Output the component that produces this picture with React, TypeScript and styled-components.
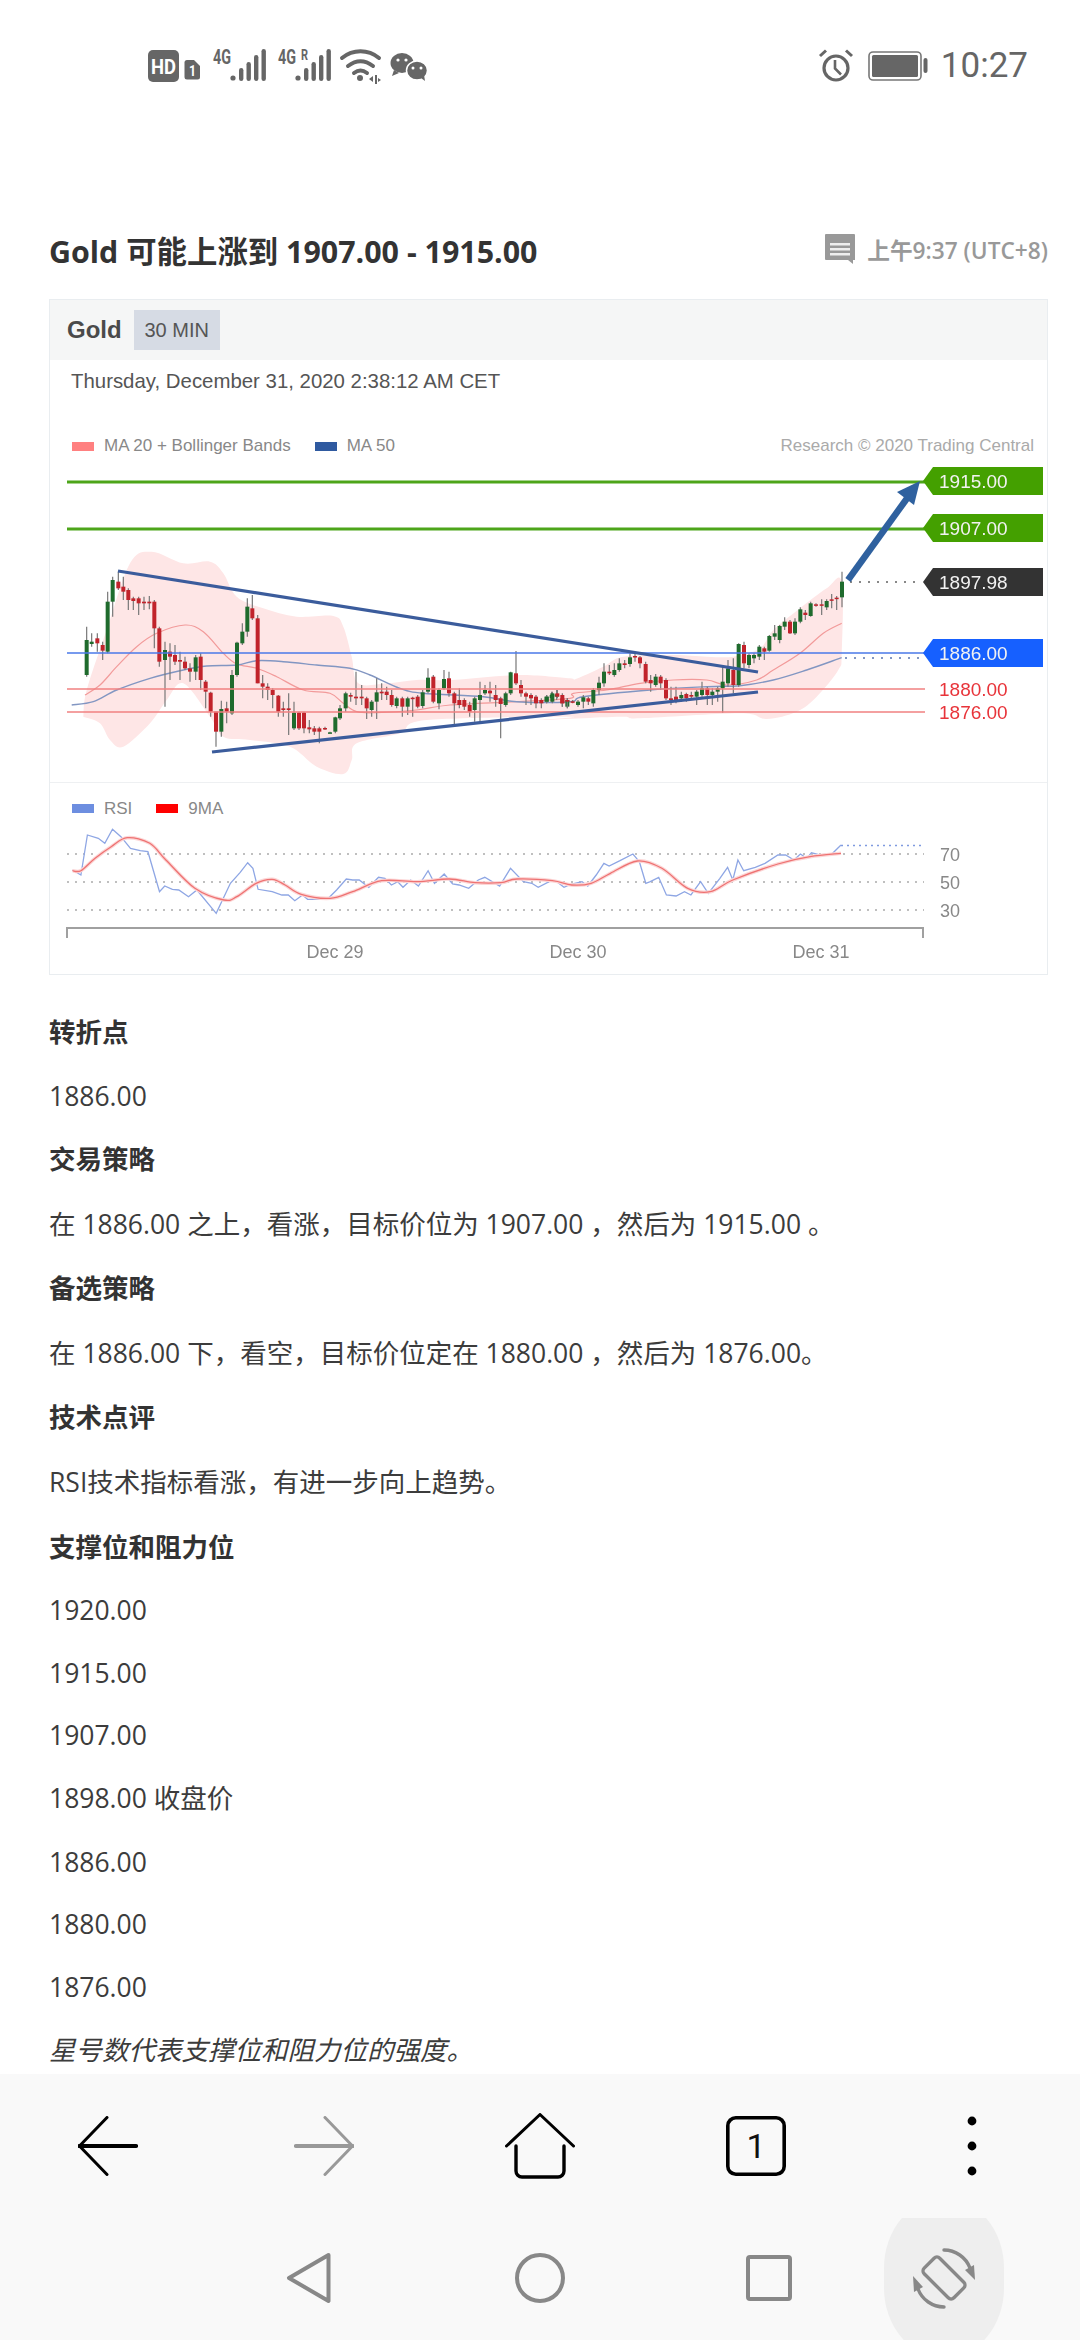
import React from "react";
import styled, { createGlobalStyle } from "styled-components";

const GlobalStyle = createGlobalStyle`
  html, body {
    margin: 0;
    padding: 0;
    background: #fff;
  }
  * {
    box-sizing: border-box;
  }
`;

const Page = styled.div`
  width: 1080px;
  height: 2340px;
  display: flex;
  flex-direction: column;
  overflow: hidden;
  background: #fff;
  color: #333;
  font-family: "Open Sans", "Noto Sans CJK SC", sans-serif;
`;

const StatusBar = styled.div`
  height: 130px;
  flex: none;
  display: flex;
  align-items: flex-start;
  justify-content: space-between;
  padding: 40px 52px 0 148px;
`;

const StatusRight = styled.div`
  display: flex;
  align-items: center;
  gap: 13px;
  height: 34px;
  margin-top: 9px;
`;

const Clock = styled.span`
  font-family: Roboto, sans-serif;
  font-size: 35px;
  line-height: 34px;
  color: #666;
`;

const Content = styled.div`
  flex: 1;
  min-height: 0;
  overflow: hidden;
  padding: 100px 32px 0 49px;
`;

const TitleRow = styled.div`
  display: flex;
  align-items: center;
  justify-content: space-between;
  height: 44px;
`;

const Title = styled.h1`
  margin: 0;
  font-size: 30.4px;
  font-weight: 700;
  line-height: 44px;
  color: #333;
`;

const Stamp = styled.div`
  display: flex;
  align-items: center;
  gap: 10px;
  margin-top: -6px;
  font-size: 22.7px;
  font-weight: 600;
  color: #999;
`;

const Card = styled.div`
  margin-top: 25px;
  height: 676px;
  border: 1px solid #e9edf0;
  font-family: "Liberation Sans", sans-serif;
`;

const CardHeader = styled.div`
  height: 60px;
  display: flex;
  align-items: center;
  gap: 12px;
  padding-left: 17px;
  background: #f5f6f6;
`;

const Symbol = styled.span`
  font-size: 24px;
  font-weight: 700;
  color: #4a4a4a;
`;

const Period = styled.span`
  width: 86px;
  height: 40px;
  display: flex;
  align-items: center;
  justify-content: center;
  background: #d6dbe4;
  font-size: 20px;
  color: #555;
`;

const DateLine = styled.div`
  height: 44px;
  padding-left: 21px;
  font-size: 20.4px;
  line-height: 42px;
  color: #555;
`;

const LegendRow = styled.div<{ $height: number; $top: number }>`
  height: ${({ $height }) => $height}px;
  display: flex;
  align-items: center;
  gap: 10px;
  padding: ${({ $top }) => $top}px 13px 0 22px;
  font-size: 17px;
  color: #888;
`;

const Swatch = styled.i<{ $color: string }>`
  width: 22px;
  height: 9px;
  background: ${({ $color }) => $color};
`;

const LegendGap = styled.span`
  width: 4px;
`;

const Credit = styled.span`
  margin-left: auto;
  color: #aaa;
`;

const ChartSvg = styled.svg`
  display: block;
  width: 998px;
  filter: blur(0.5px);
  text {
    font-family: "Liberation Sans", sans-serif;
  }
`;

const Divider = styled.div`
  height: 1px;
  background: #eef0f2;
`;

const Article = styled.div`
  margin-top: 38px;
`;

// rows with only digits sit a little tighter than rows with CJK glyphs
const Para = styled.p<{ $bold?: boolean; $italic?: boolean; $plain?: boolean }>`
  margin: 0 0 25.7px;
  font-size: 26.5px;
  line-height: ${({ $plain }) => ($plain ? "36.7px" : "38.9px")};
  white-space: nowrap;
  color: ${({ $bold }) => ($bold ? "#333" : "#3c3c3c")};
  font-weight: ${({ $bold }) => ($bold ? 700 : 400)};
  font-style: ${({ $italic }) => ($italic ? "italic" : "normal")};
`;

const Toolbar = styled.div`
  height: 144px;
  flex: none;
  display: grid;
  grid-template-columns: repeat(5, 216px);
  background: #f9f9f9;
`;

const ToolButton = styled.div`
  display: flex;
  align-items: center;
  justify-content: center;
`;

const NavBar = styled.div`
  height: 122px;
  flex: none;
  display: flex;
  overflow: hidden;
  background: #f9f9f9;
`;

const NavButton = styled.div<{ $left: number; $active?: boolean }>`
  width: 120px;
  height: ${({ $active }) => ($active ? "160px" : "120px")};
  margin-top: ${({ $active }) => ($active ? "-20px" : "0")};
  margin-left: ${({ $left }) => $left}px;
  display: flex;
  align-items: center;
  justify-content: center;
  border-radius: ${({ $active }) => ($active ? "60px / 70px" : "0")};
  background: ${({ $active }) => ($active ? "#eeeeee" : "transparent")};
`;

// [x, bodyTop, bodyBottom, wickTop, wickBottom, green?] traced from the chart, 3x zoomed coords
type Candle = [number, number, number, number, number, number];

const leftCandles: Candle[] = [
  [110,360,465,320,470,1],[125,365,372,340,380,1],[142,355,370,340,395,0],[158,375,392,365,420,0],
  [173,245,395,215,400,1],[188,180,245,170,290,1],[205,185,205,155,210,0],[220,200,215,170,240,0],
  [235,210,240,205,270,0],[250,235,243,230,270,0],[266,235,250,230,285,0],[282,245,250,230,270,0],
  [298,245,250,228,268,0],[313,245,325,240,385,0],[328,325,425,320,440,0],[345,390,420,365,560,1],
  [360,395,410,370,480,0],[375,405,425,375,435,0],[390,420,425,395,480,0],[405,425,445,410,450,0],
  [420,445,455,430,485,0],[437,412,455,405,480,1],[452,410,480,400,510,0],[467,485,515,480,565,0],
  [482,518,575,515,590,0],[498,575,635,575,680,0],[514,567,635,542,650,1],[530,565,575,545,610,0],
  [546,465,580,450,585,1],[561,368,465,365,470,1],[577,335,370,310,375,1],[592,260,335,235,350,1],
  [607,265,295,225,300,0],[623,295,490,285,490,0],[638,490,500,465,535,0],[653,500,510,490,540,0],
  [668,510,525,505,565,0],[685,527,575,525,590,0],[700,565,570,545,590,0],[716,565,570,520,645,0],
  [732,578,625,545,630,1],[747,578,625,575,630,0],[762,578,625,575,640,0],[778,622,628,600,640,0],
  [793,625,635,618,645,0],[808,625,635,620,670,0],[825,624,628,620,630,0],[840,637,640,635,640,1],
  [856,592,635,590,640,1],[870,565,595,555,600,1],[887,520,565,515,575,1],[902,525,530,518,545,0],
  [918,530,535,455,555,0],[935,530,535,495,555,0],[950,535,565,530,597,0],[965,545,570,540,590,1],
  [980,517,545,475,597,1],[995,515,520,490,540,0],[1010,515,525,500,540,0],[1025,525,555,510,560,0],
  [1040,535,558,530,565,1],[1057,535,560,530,590,0],[1073,535,560,530,585,1],[1088,533,537,530,590,0],
  [1103,530,560,525,565,0],[1118,517,558,510,565,1],[1134,473,515,445,520,1],[1150,470,545,465,550,0],
  [1167,510,550,505,568,1],[1182,477,505,450,510,1],[1197,475,520,455,530,0],[1213,520,550,515,612,0],
  [1228,540,555,505,565,0],[1243,540,560,535,570,0],[1259,555,575,545,590,0],[1274,535,570,530,605,1],
  [1290,525,540,485,605,1],[1305,510,520,495,525,1],[1320,512,520,485,545,0],[1337,525,540,495,560,0],
  [1352,535,552,530,655,0],[1367,520,555,515,560,1],[1382,457,520,455,525,1],[1398,460,490,393,495,0],
  [1413,495,520,480,530,0],[1428,520,530,515,555,0],[1443,525,535,520,555,0],[1458,530,550,525,565,0],
  [1474,540,550,535,565,0],[1490,530,545,525,550,1],[1505,525,535,515,545,1],[1520,523,530,510,540,1],
  [1537,535,550,525,560,0],[1552,540,560,535,565,1],
];

const rightCandles: Candle[] = [
  [20,530,545,525,550,1],[37,520,545,515,550,1],[52,520,530,510,535,0],[67,525,550,520,560,0],
  [82,540,545,535,565,0],[98,544,547,540,550,0],[114,545,555,540,560,1],[130,532,545,525,565,1],
  [145,535,545,530,555,0],[160,510,550,505,560,1],[177,488,510,470,525,1],[192,455,490,430,500,1],
  [208,455,460,435,465,0],[223,450,465,430,470,1],[238,430,450,415,455,1],[254,430,435,420,445,0],
  [270,412,432,400,440,1],[285,408,412,400,425,0],[300,412,430,408,445,0],[317,432,485,425,490,0],
  [332,480,490,465,515,0],[347,470,495,462,500,1],[362,470,490,465,510,0],[378,480,535,475,540,0],
  [393,535,540,500,555,0],[408,530,540,500,550,0],[424,525,535,515,545,1],[439,522,535,518,545,0],
  [454,525,530,515,540,0],[470,515,530,510,555,1],[486,505,525,485,530,1],[502,505,525,500,555,0],
  [517,515,525,505,555,1],[533,505,515,500,545,1],[548,485,505,440,578,1],[564,445,490,420,500,1],
  [580,450,495,415,520,0],[596,372,495,370,500,1],[612,375,430,365,445,0],[627,405,435,400,445,1],
  [642,405,415,400,430,1],[658,380,410,375,420,1],[673,385,395,380,420,0],[688,348,392,345,395,1],
  [704,340,350,315,360,1],[719,318,360,315,370,1],[734,305,320,292,330,1],[750,305,340,300,342,0],
  [765,305,340,295,345,1],[781,268,305,262,310,1],[796,278,285,270,300,0],[812,250,288,245,290,1],
  [828,253,257,250,260,0],[845,253,257,238,285,0],[860,243,262,238,270,1],[875,238,242,222,265,0],
  [890,233,237,228,270,0],[906,185,232,155,262,1],
];

const leftX = (z: number) => 50 + z / 3;
const rightX = (z: number) => 540 + z / 3;
const zy = (z: number) => 520 + z / 3;

type Pt = [number, number];

const toPage = (list: number[][], mapX: (z: number) => number): Pt[] =>
  list.map(([x, y]) => [mapX(x), zy(y)] as Pt);

// catmull-rom through the traced points, the real lines are curves not polylines
const smooth = (p: Pt[]) => {
  let d = `M${p[0][0].toFixed(1)} ${p[0][1].toFixed(1)}`;
  for (let i = 0; i < p.length - 1; i++) {
    const a = p[Math.max(i - 1, 0)];
    const b = p[i];
    const c = p[i + 1];
    const e = p[Math.min(i + 2, p.length - 1)];
    const c1 = [b[0] + (c[0] - a[0]) / 6, b[1] + (c[1] - a[1]) / 6];
    const c2 = [c[0] - (e[0] - b[0]) / 6, c[1] - (e[1] - b[1]) / 6];
    d += `C${c1[0].toFixed(1)} ${c1[1].toFixed(1)} ${c2[0].toFixed(1)} ${c2[1].toFixed(1)} ${c[0].toFixed(1)} ${c[1].toFixed(1)}`;
  }
  return d;
};

const band = smooth([
  ...toPage(
    [[100,590],[110,510],[170,330],[240,130],[305,95],[400,130],[480,125],[520,160],[560,230],[640,265],[740,290],[850,288],[880,320],[905,410],[925,490],[1010,490],[1100,480],[1200,480],[1400,465],[1560,475]],
    leftX
  ),
  ...toPage(
    [[100,480],[190,440],[250,410],[400,405],[500,410],[580,410],[660,385],[700,330],[780,265],[860,205],[905,185],[905,400],[895,450],[830,530],[770,575],[680,597],[600,580],[300,595],[240,590],[0,600]],
    rightX
  ),
  ...toPage(
    [[1560,590],[1130,600],[1050,640],[920,670],[905,720],[880,762],[800,740],[720,680],[600,660],[520,650],[480,590],[400,490],[350,540],[300,610],[220,680],[180,660],[150,610],[100,590]],
    leftX
  ),
]);

const ma20 = smooth([
  ...toPage(
    [[105,525],[150,495],[200,440],[260,380],[320,340],[405,315],[460,335],[520,400],[560,432],[620,445],[680,470],[760,510],[840,520],[880,550],[920,575],[980,578],[1100,570],[1200,555],[1400,545],[1560,535]],
    leftX
  ),
  ...toPage([[100,520],[200,510],[300,490],[400,480],[500,480],[560,495],[650,480],[700,450],[780,400],[850,340],[905,310]], rightX),
]);

const ma50 = smooth([
  ...toPage(
    [[65,555],[130,545],[200,510],[300,475],[400,450],[470,438],[560,435],[620,422],[700,425],[800,435],[900,445],[960,465],[1050,505],[1120,520],[1300,530],[1400,545],[1560,545]],
    leftX
  ),
  ...toPage([[130,530],[330,510],[500,500],[600,497],[700,480],[800,450],[905,413]], rightX),
]);

const rsiLine = [
  [35,270],[48,285],[58,165],[75,175],[85,190],[97,148],[110,170],[125,205],[140,212],[152,215],[170,335],[178,318],[190,328],[200,330],[215,350],[228,330],[258,400],[280,310],[295,278],[307,248],[315,265],[323,328],[345,335],[360,345],[370,345],[380,362],[392,345],[400,358],[420,358],[432,355],[445,330],[460,297],[470,300],[480,300],[495,322],[510,292],[520,295],[530,315],[540,305],[548,322],[560,300],[572,318],[587,272],[597,310],[612,282],[625,312],[635,315],[650,325],[665,300],[675,292],[698,318],[715,265],[735,305],[748,310],[758,322],[775,305],[785,302],[798,322],[810,312],[826,305],[835,318],[848,285],[860,250],[868,258],[885,242],[905,222],[915,245],[925,310],[932,305],[945,292],[957,345],[972,348],[985,335],[995,345],[1010,305],[1022,340],[1040,295],[1052,262],[1060,300],[1068,240],[1077,272],[1095,262],[1110,250],[1130,225],[1142,225],[1155,240],[1165,222],[1175,235],[1182,218],[1195,225],[1215,220],[1228,195],
];

const rsiAverage = [
  [35,272],[48,272],[70,235],[95,200],[120,173],[155,190],[180,240],[225,325],[270,360],[290,350],[320,310],[345,298],[365,315],[390,343],[435,355],[470,335],[515,302],[570,305],[620,297],[660,308],[700,308],[725,297],[780,302],[810,315],[840,310],[870,280],[912,243],[950,265],[990,325],[1025,335],[1060,300],[1130,252],[1180,230],[1228,220],
];

const rsiPoints = (list: number[][]): Pt[] => list.map(([x, y]) => [50 + x / 1.5525, 780 + y / 3] as Pt);

const rsiPolyline = rsiPoints(rsiLine)
  .map(([x, y]) => `${x.toFixed(1)},${y.toFixed(1)}`)
  .join(" ");
const rsiCurve = smooth(rsiPoints(rsiAverage));

const CandleMarks: React.FC<{ list: Candle[]; mapX: (z: number) => number }> = ({ list, mapX }) => (
  <>
    {list.map(([x, top, bottom, wickTop, wickBottom, up]) => (
      <g key={x}>
        <line x1={mapX(x)} x2={mapX(x)} y1={zy(wickTop)} y2={zy(wickBottom)} stroke="#777" strokeWidth="1.2" />
        <rect
          x={mapX(x) - 2}
          y={zy(top)}
          width="4"
          height={Math.max(1.5, (bottom - top) / 3)}
          fill={up ? "#1f6b2d" : "#c1232b"}
        />
      </g>
    ))}
  </>
);

const PriceTag: React.FC<{ y: number; color: string; label: string }> = ({ y, color, label }) => (
  <g>
    <polygon points={`923,${y} 933,${y - 14} 1043,${y - 14} 1043,${y + 14} 933,${y + 14}`} fill={color} />
    <text x="939" y={y + 7} fontSize="19" fill="#f2f2f2">
      {label}
    </text>
  </g>
);

const MainChart: React.FC = () => (
  <ChartSvg viewBox="50 461 998 321" height="321">
    <path d={band} fill="#fee6e6" />
    <path d={ma20} fill="none" stroke="#f29a9a" strokeWidth="1.2" />
    <path d={ma50} fill="none" stroke="#8296c2" strokeWidth="1.4" />
    <CandleMarks list={leftCandles} mapX={leftX} />
    <CandleMarks list={rightCandles} mapX={rightX} />

    <line x1="67" x2="925" y1="482" y2="482" stroke="#4da51a" strokeWidth="2.8" />
    <line x1="67" x2="925" y1="529" y2="529" stroke="#4da51a" strokeWidth="2.8" />
    <line x1="67" x2="925" y1="653" y2="653" stroke="#4a78e8" strokeWidth="1.6" />
    <line x1="67" x2="925" y1="689" y2="689" stroke="#f08080" strokeWidth="1.4" />
    <line x1="67" x2="925" y1="712" y2="712" stroke="#f08080" strokeWidth="1.4" />
    <line x1="850" x2="922" y1="582" y2="582" stroke="#888" strokeWidth="2" strokeDasharray="2 7" />
    <line x1="845" x2="922" y1="658" y2="658" stroke="#8296c2" strokeWidth="2" strokeDasharray="2 7" />

    <line x1="118" y1="571" x2="758" y2="672" stroke="#3b5c9c" strokeWidth="3.2" />
    <line x1="212" y1="752" x2="758" y2="692" stroke="#3b5c9c" strokeWidth="3.2" />
    <line x1="848" y1="580" x2="908" y2="497" stroke="#2f619f" strokeWidth="6.5" />
    <polygon points="920,481 897,492 914,505" fill="#2f619f" />

    <PriceTag y={481} color="#44a000" label="1915.00" />
    <PriceTag y={528} color="#44a000" label="1907.00" />
    <PriceTag y={582} color="#333333" label="1897.98" />
    <PriceTag y={653} color="#1660ff" label="1886.00" />
    <text x="939" y="696" fontSize="19" fill="#e8343a">
      1880.00
    </text>
    <text x="939" y="719" fontSize="19" fill="#e8343a">
      1876.00
    </text>
  </ChartSvg>
);

const RsiChart: React.FC = () => (
  <ChartSvg viewBox="50 824 998 150" height="150">
    {[854, 882, 910].map((y) => (
      <line key={y} x1="67" x2="924" y1={y} y2={y} stroke="#aaa" strokeWidth="1.6" strokeDasharray="2 6" />
    ))}
    <line x1="841" x2="921" y1="845.5" y2="845.5" stroke="#7f9ae0" strokeWidth="1.6" strokeDasharray="2 4" />
    <polyline points={rsiPolyline} fill="none" stroke="#8ea6e4" strokeWidth="1.3" />
    <path d={rsiCurve} fill="none" stroke="#fcd6d6" strokeWidth="3.6" />
    <path d={rsiCurve} fill="none" stroke="#ee7272" strokeWidth="1.3" />
    <text x="940" y="861" fontSize="18" fill="#888">70</text>
    <text x="940" y="889" fontSize="18" fill="#888">50</text>
    <text x="940" y="917" fontSize="18" fill="#888">30</text>
    <path d="M67 938 V928 H923 V938" fill="none" stroke="#a0a0a0" strokeWidth="2" />
    <text x="335" y="958" fontSize="18" fill="#888" textAnchor="middle">Dec 29</text>
    <text x="578" y="958" fontSize="18" fill="#888" textAnchor="middle">Dec 30</text>
    <text x="821" y="958" fontSize="18" fill="#888" textAnchor="middle">Dec 31</text>
  </ChartSvg>
);

const SignalBars: React.FC<{ x: number }> = ({ x }) => (
  <g fill="#666">
    <circle cx={x + 2} cy="78" r="2.6" />
    <rect x={x + 8} y="68" width="4.4" height="13" rx="2.2" />
    <rect x={x + 15.5} y="62" width="4.4" height="19" rx="2.2" />
    <rect x={x + 23} y="55" width="4.4" height="26" rx="2.2" />
    <rect x={x + 30.5} y="49" width="4.4" height="32" rx="2.2" />
  </g>
);

const SmallLabel: React.FC<{ x: number; y: number; size: number; width: number; fill?: string; children: string }> = ({
  x,
  y,
  size,
  width,
  fill = "#666",
  children,
}) => (
  <text
    x={x}
    y={y}
    fontSize={size}
    fontWeight="700"
    fontFamily="Roboto, sans-serif"
    fill={fill}
    textLength={width}
    lengthAdjust="spacingAndGlyphs"
  >
    {children}
  </text>
);

const StatusLeftIcons: React.FC = () => (
  <svg width="282" height="50" viewBox="148 40 282 50">
    <rect x="148" y="50" width="31" height="32" rx="5" fill="#666" />
    <SmallLabel x={151} y={73.5} size={21} width={25} fill="#fff">
      HD
    </SmallLabel>
    <path d="M187 60h7l6 6v11a2.5 2.5 0 0 1-2.500 2.500h-10.500a2.5 2.5 0 0 1-2.500-2.500V62.500a2.5 2.5 0 0 1 2.500-2.500z" fill="#666" />
    <SmallLabel x={189} y={76} size={15} width={7} fill="#fff">
      1
    </SmallLabel>
    <SmallLabel x={213} y={64} size={20} width={18}>
      4G
    </SmallLabel>
    <SignalBars x={231} />
    <SmallLabel x={278} y={64} size={20} width={18}>
      4G
    </SmallLabel>
    <SmallLabel x={301} y={60} size={15} width={7}>
      R
    </SmallLabel>
    <SignalBars x={296} />
    <g fill="none" stroke="#666" strokeWidth="4" strokeLinecap="round">
      <path d="M342 58c11-9 26-9 37 0" />
      <path d="M348 66c8-6 17-6 25 0" />
      <path d="M354 73c4-3 9-3 13 0" />
    </g>
    <circle cx="360" cy="78" r="3" fill="#666" />
    <path d="M369 79l4-3v6zM375 75h2v9h-2zM378 78l3 2-3 2z" fill="#666" />
    <ellipse cx="402" cy="63" rx="11.5" ry="10" fill="#666" />
    <path d="M394 70l-2 6 7-3z" fill="#666" />
    <ellipse cx="417" cy="70.5" rx="10.5" ry="9.5" fill="#666" stroke="#fff" strokeWidth="1.5" />
    <path d="M421 78l4 3-1-6z" fill="#666" />
    <g fill="#fff">
      <circle cx="398" cy="60" r="1.6" />
      <circle cx="406" cy="60" r="1.6" />
      <circle cx="413" cy="68" r="1.5" />
      <circle cx="421" cy="68" r="1.5" />
    </g>
  </svg>
);

const AlarmIcon: React.FC = () => (
  <svg width="38" height="34" viewBox="0 0 38 34">
    <circle cx="19" cy="19" r="12" fill="none" stroke="#666" strokeWidth="3.2" />
    <path d="M18 11v8.5l6 6" fill="none" stroke="#666" strokeWidth="2.6" />
    <path d="M3 7l6-5.5M35 7l-6-5.5" fill="none" stroke="#666" strokeWidth="3" />
  </svg>
);

const BatteryIcon: React.FC = () => (
  <svg width="60" height="30" viewBox="0 0 60 30">
    <rect x="1" y="1" width="52" height="28" rx="4" fill="none" stroke="#777" strokeWidth="1.6" />
    <rect x="4" y="4" width="46" height="22" rx="1.5" fill="#666" />
    <rect x="55.5" y="7" width="4" height="15" rx="2" fill="#666" />
  </svg>
);

const CommentIcon: React.FC = () => (
  <svg width="34" height="34" viewBox="0 0 34 34">
    <path d="M3 2h28a1 1 0 0 1 1 1v25h-2v4l-5-4H3a1 1 0 0 1-1-1V3a1 1 0 0 1 1-1z" fill="#999" />
    <path d="M7 11h20v2.5H7zM7 16h20v2.5H7zM7 21h20v2.5H7z" fill="#eee" />
  </svg>
);

const ArrowIcon: React.FC<{ color: string; flip?: boolean }> = ({ color, flip }) => (
  <svg width="60" height="60" viewBox="0 0 60 60" transform={flip ? "scale(-1 1)" : undefined}>
    <path d="M29 1.5L1.5 30L29 58.5" fill="none" stroke={color} strokeWidth="3" strokeLinecap="round" strokeLinejoin="round" />
    <path d="M1.5 30H58" stroke={color} strokeWidth="4.2" strokeLinecap="round" />
  </svg>
);

const HomeIcon: React.FC = () => (
  <svg width="70" height="66" viewBox="0 0 70 66">
    <path d="M1.5 33L35 1.5L68.5 33" fill="none" stroke="#000" strokeWidth="3" strokeLinecap="round" strokeLinejoin="round" />
    <path d="M11 33V58a6 6 0 0 0 6 6H53a6 6 0 0 0 6-6V33" fill="none" stroke="#000" strokeWidth="3.4" strokeLinecap="round" />
  </svg>
);

const TabsIcon: React.FC = () => (
  <svg width="60" height="60" viewBox="0 0 60 60">
    <rect x="1.8" y="1.8" width="56.4" height="56.4" rx="8" fill="none" stroke="#000" strokeWidth="3.6" />
    <text x="30" y="42" fontSize="34" fontFamily="Roboto, sans-serif" textAnchor="middle" fill="#111">
      1
    </text>
  </svg>
);

const MoreIcon: React.FC = () => (
  <svg width="10" height="60" viewBox="0 0 10 60">
    <circle cx="5" cy="5" r="4.4" fill="#000" />
    <circle cx="5" cy="30" r="4.4" fill="#000" />
    <circle cx="5" cy="55" r="4.4" fill="#000" />
  </svg>
);

const NavBackIcon: React.FC = () => (
  <svg width="46" height="52" viewBox="0 0 46 52">
    <path d="M42.5 3L3 26L42.5 49Z" fill="none" stroke="#888" strokeWidth="4" strokeLinejoin="round" />
  </svg>
);

const NavHomeIcon: React.FC = () => (
  <svg width="50" height="50" viewBox="0 0 50 50">
    <circle cx="25" cy="25" r="23" fill="none" stroke="#888" strokeWidth="4" />
  </svg>
);

const NavRecentIcon: React.FC = () => (
  <svg width="46" height="46" viewBox="0 0 46 46">
    <rect x="2" y="2" width="42" height="42" rx="2" fill="none" stroke="#888" strokeWidth="4" />
  </svg>
);

const RotateIcon: React.FC = () => (
  <svg width="68" height="68" viewBox="-34 -34 68 68">
    <rect x="-11" y="-21" width="22" height="42" rx="4" transform="rotate(-45)" fill="none" stroke="#888" strokeWidth="3.4" />
    <path d="M0 -28A28 28 0 0 1 26 -10" fill="none" stroke="#888" strokeWidth="3.4" strokeLinecap="round" />
    <path d="M21 -8L30 -13L31 2Z" fill="#888" />
    <path d="M0 29A28 28 0 0 1 -26 11" fill="none" stroke="#888" strokeWidth="3.4" strokeLinecap="round" />
    <path d="M-21 9L-30 14L-31 -2Z" fill="#888" />
  </svg>
);

const App: React.FC = () => (
  <Page>
    <GlobalStyle />
    <StatusBar>
      <StatusLeftIcons />
      <StatusRight>
        <AlarmIcon />
        <BatteryIcon />
        <Clock>10:27</Clock>
      </StatusRight>
    </StatusBar>

    <Content>
      <TitleRow>
        <Title>Gold 可能上涨到 1907.00 - 1915.00</Title>
        <Stamp>
          <CommentIcon />
          上午9:37 (UTC+8)
        </Stamp>
      </TitleRow>

      <Card>
        <CardHeader>
          <Symbol>Gold</Symbol>
          <Period>30 MIN</Period>
        </CardHeader>
        <DateLine>Thursday, December 31, 2020 2:38:12 AM CET</DateLine>
        <LegendRow $height={57} $top={27}>
          <Swatch $color="#ff8080" />
          MA 20 + Bollinger Bands
          <LegendGap />
          <Swatch $color="#2f5aa0" />
          MA 50
          <Credit>Research © 2020 Trading Central</Credit>
        </LegendRow>
        <MainChart />
        <Divider />
        <LegendRow $height={41} $top={10}>
          <Swatch $color="#6d8ee0" />
          RSI
          <LegendGap />
          <Swatch $color="#ff0000" />
          9MA
        </LegendRow>
        <RsiChart />
      </Card>

      <Article>
        <Para $bold>转折点</Para>
        <Para $plain>1886.00</Para>
        <Para $bold>交易策略</Para>
        <Para>在 1886.00 之上，看涨，目标价位为 1907.00 ，然后为 1915.00 。</Para>
        <Para $bold>备选策略</Para>
        <Para>在 1886.00 下，看空，目标价位定在 1880.00 ，然后为 1876.00。</Para>
        <Para $bold>技术点评</Para>
        <Para>RSI技术指标看涨，有进一步向上趋势。</Para>
        <Para $bold>支撑位和阻力位</Para>
        <Para $plain>1920.00</Para>
        <Para $plain>1915.00</Para>
        <Para $plain>1907.00</Para>
        <Para>1898.00 收盘价</Para>
        <Para $plain>1886.00</Para>
        <Para $plain>1880.00</Para>
        <Para $plain>1876.00</Para>
        <Para $italic>星号数代表支撑位和阻力位的强度。</Para>
      </Article>
    </Content>

    <Toolbar>
      <ToolButton>
        <ArrowIcon color="#000" />
      </ToolButton>
      <ToolButton>
        <ArrowIcon color="#999" flip />
      </ToolButton>
      <ToolButton>
        <HomeIcon />
      </ToolButton>
      <ToolButton>
        <TabsIcon />
      </ToolButton>
      <ToolButton>
        <MoreIcon />
      </ToolButton>
    </Toolbar>

    <NavBar>
      <NavButton $left={249}>
        <NavBackIcon />
      </NavButton>
      <NavButton $left={111}>
        <NavHomeIcon />
      </NavButton>
      <NavButton $left={109}>
        <NavRecentIcon />
      </NavButton>
      <NavButton $left={55} $active>
        <RotateIcon />
      </NavButton>
    </NavBar>
  </Page>
);

export default App;
